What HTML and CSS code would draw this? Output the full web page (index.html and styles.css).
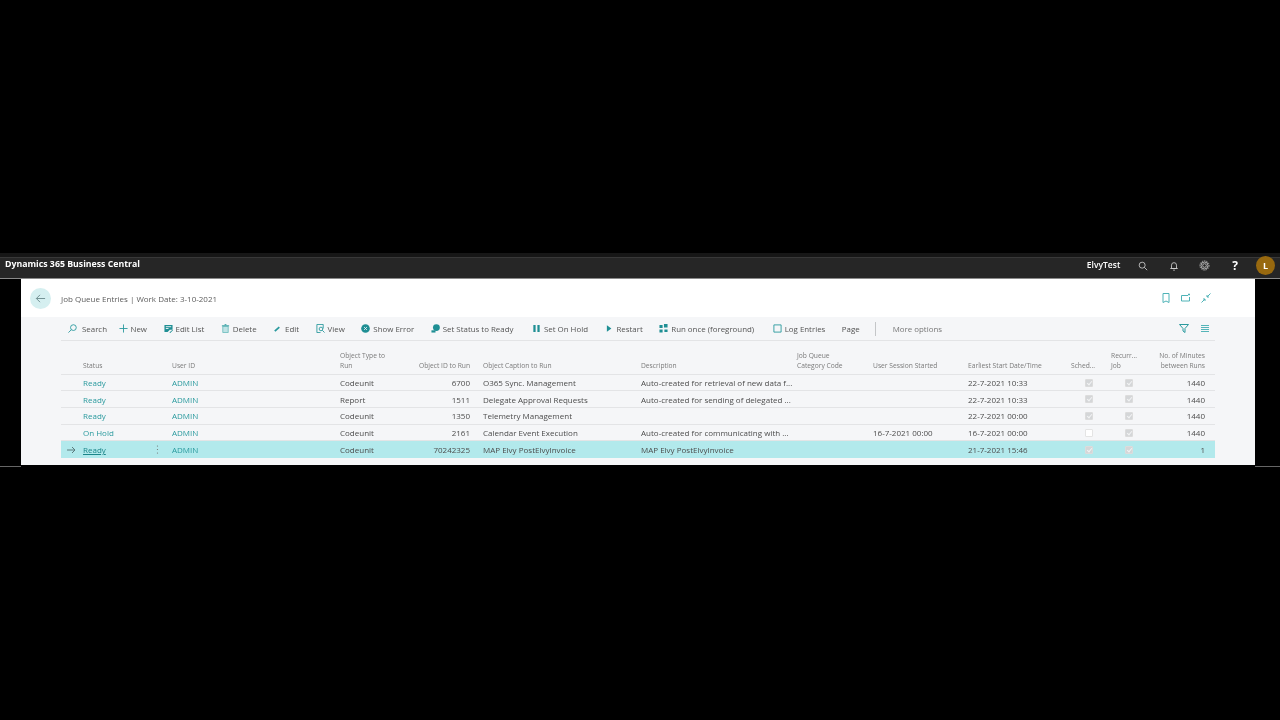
FILE: index.html
```html
<!DOCTYPE html>
<html lang="en">
<head>
<meta charset="utf-8">
<title>Job Queue Entries</title>
<link rel="stylesheet" href="styles.css">
</head>
<body>
<div class="frame">
  <header class="topbar">
    <span class="brand">Dynamics 365 Business Central</span>
    <div class="top-right">
      <span class="company">ElvyTest</span>
      <svg class="top-icon" viewBox="0 0 12 12"><circle cx="5" cy="5" r="3.6"/><path d="M7.600 7.600L11 11"/></svg>
      <svg class="top-icon" viewBox="0 0 12 12"><path d="M3 9V5a3 3 0 0 1 6 0v4zM1.500 9h9M5 11h2"/></svg>
      <svg class="top-icon top-gear" viewBox="0 0 12 12"><circle cx="6" cy="6" r="2"/><circle cx="6" cy="6" r="3.800"/><circle class="gear-teeth" cx="6" cy="6" r="5"/></svg>
      <span class="help">?</span>
      <span class="avatar">L</span>
    </div>
  </header>
  <main class="page">
    <div class="page-head">
      <button class="back"><svg viewBox="0 0 12 12"><path d="M11 6H1.500M5.500 2L1.500 6l4 4"/></svg></button>
      <span class="page-title">Job Queue Entries | Work Date: 3-10-2021</span>
      <div class="head-icons">
        <svg viewBox="0 0 10 10"><path d="M2 .5h6v9L5 8 2 9.500z"/></svg>
        <svg viewBox="0 0 10 10"><path d="M7 2.500H.5v5.500h8V4M8 .5v2M7 1.500h2"/></svg>
        <svg viewBox="0 0 10 10"><path d="M9.500.5L6 4M.5 9.500L4 6M6 2v2h2M2 6h2v2"/></svg>
      </div>
    </div>
    <div class="content">
      <div class="toolbar">
        <span class="tool tool-search"><svg viewBox="0 0 10 10"><circle cx="6" cy="4" r="3.200"/><path d="M3.800 6.300L.5 9.500"/></svg>Search</span>
        <span class="tool tool-new"><svg viewBox="0 0 10 10"><path d="M5 .5v9M.5 5h9"/></svg>New</span>
        <span class="tool"><svg viewBox="0 0 10 10"><path class="solid" d="M.5 1h9v5.500H6.500L4 9H.5z"/><path class="cut" d="M2 3h6M2 5h3"/><path class="solid" d="M6 9.500l3.500-3 .5.500-3 3z"/></svg>Edit List</span>
        <span class="tool"><svg viewBox="0 0 10 10"><path class="fade" d="M2 2.500h6v7H2z"/><path d="M1 2h8M4 .7h2"/></svg>Delete</span>
        <span class="tool"><svg viewBox="0 0 10 10"><path class="thick" d="M2 8L7 3.500"/></svg>Edit</span>
        <span class="tool"><svg viewBox="0 0 10 10"><path d="M8 5V.5H1v9h4"/><circle cx="5.500" cy="5.500" r="2"/><path d="M7 7l2.500 2.500"/></svg>View</span>
        <span class="tool"><svg viewBox="0 0 10 10"><circle class="solid" cx="5" cy="5" r="4.800"/><path class="cut" d="M3.500 3.500l3 3M6.500 3.500l-3 3"/></svg>Show Error</span>
        <span class="tool"><svg viewBox="0 0 10 10"><circle class="solid" cx="6" cy="4" r="3.800"/><path class="solid" d="M.5 7h4.500v2.500H.5z"/></svg>Set Status to Ready</span>
        <span class="tool tool-hold"><svg viewBox="0 0 10 10"><path class="solid" d="M1.500 1h2.500v8H1.500zM6 1h2.500v8H6z"/></svg>Set On Hold</span>
        <span class="tool tool-restart"><svg viewBox="0 0 10 10"><path class="solid" d="M1 1.500l5 3.500-5 3.500z"/></svg>Restart</span>
        <span class="tool tool-run"><svg viewBox="0 0 10 10"><path class="solid" d="M.5 1h3.500v3.500H.5zM5.500 0h4v4h-4zM.5 6h3.500v3.500H.5zM6 6h3.500v3H6z"/></svg>Run once (foreground)</span>
        <span class="tool"><svg viewBox="0 0 10 10"><path d="M1 1h8v8H1z"/></svg>Log Entries</span>
        <span class="tool tool-page">Page</span>
        <span class="divider"></span>
        <span class="tool tool-more">More options</span>
        <div class="tool-end">
          <svg viewBox="0 0 10 9"><path d="M.5.5h9L6 4.500v4L4 7V4.500z"/></svg>
          <svg class="list-icon" viewBox="0 0 10 9"><path d="M1 1.500h8M1 3.500h8M1 5.500h8M1 7.500h8"/></svg>
        </div>
      </div>
      <div class="grid">
        <div class="row row-head">
          <span></span><span>Status</span><span>User ID</span><span>Object Type to<br>Run</span><span class="num">Object ID to Run</span><span>Object Caption to Run</span><span>Description</span><span>Job Queue<br>Category Code</span><span>User Session Started</span><span>Earliest Start Date/Time</span><span>Sched...</span><span>Recurr...<br>Job</span><span class="num">No. of Minutes<br>between Runs</span>
        </div>
        <div class="row">
          <span></span><a class="link">Ready</a><a class="link">ADMIN</a><span>Codeunit</span><span class="num">6700</span><span>O365 Sync. Management</span><span>Auto-created for retrieval of new data f...</span><span></span><span></span><span>22-7-2021 10:33</span><span class="chk on"></span><span class="chk on"></span><span class="num">1440</span>
        </div>
        <div class="row">
          <span></span><a class="link">Ready</a><a class="link">ADMIN</a><span>Report</span><span class="num">1511</span><span>Delegate Approval Requests</span><span>Auto-created for sending of delegated ...</span><span></span><span></span><span>22-7-2021 10:33</span><span class="chk on"></span><span class="chk on"></span><span class="num">1440</span>
        </div>
        <div class="row">
          <span></span><a class="link">Ready</a><a class="link">ADMIN</a><span>Codeunit</span><span class="num">1350</span><span>Telemetry Management</span><span></span><span></span><span></span><span>22-7-2021 00:00</span><span class="chk on"></span><span class="chk on"></span><span class="num">1440</span>
        </div>
        <div class="row">
          <span></span><a class="link">On Hold</a><a class="link">ADMIN</a><span>Codeunit</span><span class="num">2161</span><span>Calendar Event Execution</span><span>Auto-created for communicating with ...</span><span></span><span>16-7-2021 00:00</span><span>16-7-2021 00:00</span><span class="chk"></span><span class="chk on"></span><span class="num">1440</span>
        </div>
        <div class="row row-active">
          <svg class="row-arrow" viewBox="0 0 10 10"><path d="M1 5h8M6 2l3 3-3 3"/></svg><div class="status-cell"><a class="link link-active">Ready</a><svg class="dots" viewBox="0 0 3 9"><circle cx="1.500" cy="1" r=".6"/><circle cx="1.500" cy="4.500" r=".6"/><circle cx="1.500" cy="8" r=".6"/></svg></div><a class="link">ADMIN</a><span>Codeunit</span><span class="num">70242325</span><span>MAP Elvy PostElvyInvoice</span><span>MAP Elvy PostElvyInvoice</span><span></span><span></span><span>21-7-2021 15:46</span><span class="chk on"></span><span class="chk on"></span><span class="num">1</span>
        </div>
      </div>
    </div>
  </main>
  <div class="foot-lines"></div>
</div>
</body>
</html>
```
FILE: styles.css
```css
* { box-sizing: border-box; }
html, body { margin: 0; height: 100%; background: #000; overflow: hidden; }
body { font-family: "Open Sans", "Liberation Sans", sans-serif; font-size: 8px; color: #4c4c4c; }
.frame { padding-top: 253px; filter: blur(.3px); }
svg { fill: none; stroke: #2a9a9e; stroke-width: 1; display: block; }

.topbar { height: 26px; background: #262626; border-top: 4px solid #161616; border-bottom: 1px solid #8a8a8a; box-shadow: inset 0 1px 0 #383838; display: flex; align-items: center; justify-content: space-between; padding: 0 5px; color: #fff; }
.brand { font-weight: 700; font-size: 8.75px; margin-top: -7px; }
.top-right { display: flex; align-items: center; margin-top: -4px; }
.company { font-weight: 600; font-size: 8.5px; margin-right: 18px; margin-top: -3px; }
.top-icon { width: 10px; height: 10px; stroke: #d0d0d0; margin-right: 20.5px; }
.top-gear { width: 11px; height: 11px; stroke: #bdbdbd; margin-right: 22px; }
.gear-teeth { stroke-dasharray: 1.500 1; }
.help { font-weight: 700; font-size: 12px; margin-right: 18px; }
.avatar { width: 19px; height: 19px; border-radius: 50%; background: #98690f; font-weight: 700; font-size: 9px; display: flex; align-items: center; justify-content: center; }

.page { margin: 0 25px 0 21px; background: #fff; }
.page-head { height: 38px; display: flex; align-items: center; padding: 0 44px 0 9px; }
.back { width: 21px; height: 21px; border: 0; padding: 0; border-radius: 50%; background: #d5eff0; display: flex; align-items: center; justify-content: center; margin-right: 10px; }
.back svg { width: 11px; height: 11px; stroke: #6a8a8c; }
.page-title { font-size: 8px; color: #5c5c5c; }
.head-icons { margin-left: auto; display: flex; gap: 10px; }
.head-icons svg { width: 10px; height: 10px; stroke: #4fb3b7; }

.content { background: #f5f6f8; padding: 0 40px; height: 148px; }
.toolbar { height: 24px; border-bottom: 1px solid #e3e4e6; display: flex; align-items: center; gap: 16.5px; padding-left: 7px; font-size: 7.9px; color: #555; }
.tool { display: flex; align-items: center; gap: 3px; white-space: nowrap; }
.tool svg { width: 9px; height: 9px; flex: none; }
.tool-search { margin-right: -5px; gap: 5px; }
.tool-new { gap: 3px; }
.tool-hold { margin-left: 2px; margin-right: 2px; }
.tool-restart { gap: 1px; }
.tool-run { margin-right: 2px; }
.tool-page { color: #505050; margin-right: -1px; }
.tool-more { color: #777; }
.divider { width: 1px; height: 14px; background: #c4c6c8; }
.tool-end { margin-left: auto; display: flex; gap: 11px; padding-right: 5px; }
.tool-end svg { width: 10px; height: 9px; }
.tool-end .list-icon { stroke: #55b5b9; }
.solid { fill: #1f8f94; stroke: none; }
.cut { stroke: #f5f6f8; stroke-width: 1; }
.fade { fill: #bfe3e5; stroke: #6fbdc0; }
.thick { stroke-width: 2; }

.row { display: grid; grid-template-columns: 22px 89px 168px 60px 70px 171px 156px 76px 95px 103px 40px 40px 64px; height: 16.7px; align-items: center; border-bottom: 1px solid #e3e4e6; white-space: nowrap; }
.row > :nth-child(6) { margin-left: 13px; }
.row > .num:last-child { padding-right: 10px; }
.row-head { height: 33.7px; align-items: end; padding-bottom: 3px; font-size: 6.7px; line-height: 10px; color: #7a7a7a; }
.num { text-align: right; }
.link { color: #2a9a9e; }
.status-cell { display: flex; justify-content: space-between; align-items: center; padding-right: 13px; }
.row-active { background: #b2e9ec; border-bottom: 0; height: 16.5px; }
.link-active { text-decoration: underline; color: #1c8589; }
.dots { width: 3px; height: 9px; fill: #707070; stroke: none; }
.row-arrow { width: 10px; height: 10px; stroke: #5a7a7c; margin-left: 5px; }
.chk { position: relative; width: 8px; height: 8px; border: 1px solid #e4e4e4; border-radius: 1px; background: #fff; margin-left: 14px; }
.chk.on { background: #d4d6d8; border-color: #dcdcdc; }
.chk.on::after { content: ""; position: absolute; left: 2px; top: 0; width: 2px; height: 4px; border: solid #f2f3f4; border-width: 0 1px 1px 0; transform: rotate(40deg); }
.foot-lines { height: 1px; margin-top: 1px; background: linear-gradient(90deg, #666 21px, #000 21px, #000 1255px, #666 1255px); }
```
